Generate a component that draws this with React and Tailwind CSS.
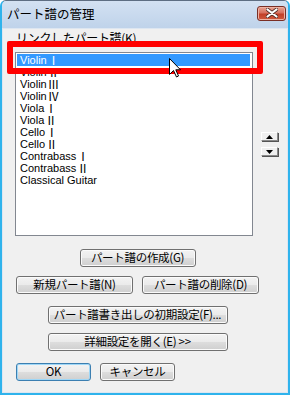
import React from 'react';

const PARTS = [
  ['Violin', 'Ⅰ'],
  ['Violin', 'Ⅱ'],
  ['Violin', 'Ⅲ'],
  ['Violin', 'Ⅳ'],
  ['Viola', 'Ⅰ'],
  ['Viola', 'Ⅱ'],
  ['Cello', 'Ⅰ'],
  ['Cello', 'Ⅱ'],
  ['Contrabass', 'Ⅰ'],
  ['Contrabass', 'Ⅱ'],
  ['Classical Guitar', ''],
];

function Btn({ children, className = '', primary = false }) {
  return (
    <button
      type="button"
      className={`flex h-[18px] items-center justify-center whitespace-nowrap rounded-[3px] border bg-[linear-gradient(#f3f3f3_0%,#ebebeb_48%,#dddddd_52%,#cfcfcf_100%)] text-[11.5px] leading-none tracking-[-0.3px] text-black ${
        primary
          ? 'border-[#3c7fb1] shadow-[inset_0_0_0_1px_#9fd7f7]'
          : 'border-[#707070] shadow-[inset_0_0_0_1px_#fbfbfb]'
      } ${className}`}
    >
      {children}
    </button>
  );
}

function ArrowBtn({ up }) {
  return (
    <button
      type="button"
      className="flex h-[9px] w-[17px] items-center justify-center border border-t-white border-l-white border-r-[#8a8a8a] border-b-[#8a8a8a] bg-[#f0f0f0] shadow-[1px_1px_0_#555]"
    >
      <svg width="7" height="4" viewBox="0 0 7 4">
        {up ? <path d="M3.5 0 7 4H0z" fill="#000" /> : <path d="M0 0h7L3.5 4z" fill="#000" />}
      </svg>
    </button>
  );
}

export default function App() {
  return (
    <div className="relative flex h-[395px] w-[290px] flex-col overflow-hidden rounded-t-[6px] border-2 border-t border-[#2fb3ec] border-t-[#5e6e82] bg-[#c5d7ed] font-['Noto_Sans_CJK_JP',sans-serif]">
      {/* title bar */}
      <div className="flex h-[27px] shrink-0 items-center justify-between bg-[linear-gradient(#d3e1f2,#bfd3ea)] pl-[5px] pr-[2px]">
        <span className="pb-[1px] text-[12.5px] leading-none text-black">パート譜の管理</span>
        <button
          type="button"
          className="mb-[3px] flex h-[15px] w-[29px] items-center justify-center rounded-[3px] border border-[#7a2f26] bg-[linear-gradient(#e8a493_0%,#d7705e_45%,#c23f27_55%,#cf5a3f_100%)] shadow-[inset_0_0_0_1px_#eeb2a3]"
        >
          <svg width="12" height="10" viewBox="0 0 12 10">
            <path d="M1.5 1.5 10.5 8.5M10.5 1.5 1.5 8.5" stroke="#4a2a25" strokeWidth="3.6" strokeLinecap="round" />
            <path d="M1.5 1.5 10.5 8.5M10.5 1.5 1.5 8.5" stroke="#fff" strokeWidth="2.2" strokeLinecap="round" />
          </svg>
        </button>
      </div>

      {/* client area */}
      <div className="flex flex-1 flex-col border border-[#dde6f1] bg-[#f0f0f0]">
        <div className="pl-[13px] pt-[3px] text-[12px] leading-[12px] tracking-[-0.3px] text-black">リンクしたパート譜(K)</div>

        <div className="mt-[8px] flex items-center">
          <div className="ml-[12px] h-[184px] w-[238px] border border-[#828790] bg-white p-px font-['Liberation_Sans',sans-serif] text-[11px]">
            {PARTS.map(([name, num], i) => (
              <div
                key={name + num}
                className={`mr-px flex h-[12px] items-center gap-[1px] pl-[3px] leading-[12px] ${i === 0 ? 'bg-[#3399ff] text-white' : 'text-black'}`}
              >
                <span>{name}</span>
                {num && <span className="font-['Noto_Sans_CJK_JP',sans-serif] text-[11.5px] leading-[12px]">{num}</span>}
              </div>
            ))}
          </div>
          <div className="ml-[8px] flex flex-col gap-[6px]">
            <ArrowBtn up />
            <ArrowBtn />
          </div>
        </div>

        <div className="ml-[13px] flex w-[243px] flex-col items-center">
          <Btn className="mt-[13px] w-[116px]">パート譜の作成(G)</Btn>
          <div className="mt-[9px] flex w-full gap-[9px]">
            <Btn className="w-[117px]">新規パート譜(N)</Btn>
            <Btn className="w-[117px]">パート譜の削除(D)</Btn>
          </div>
          <Btn className="mt-[12px] w-[180px]">パート譜書き出しの初期設定(F)...</Btn>
          <Btn className="mt-[9px] w-[180px]">詳細設定を開く(E) &gt;&gt;</Btn>
          <div className="mt-[12px] flex w-full gap-[9px]">
            <Btn primary className="w-[75px]">OK</Btn>
            <Btn className="w-[75px]">キャンセル</Btn>
          </div>
        </div>
      </div>

      {/* red annotation */}
      <div className="absolute left-[5px] top-[40px] h-[33px] w-[256px] rounded-[2px] border-[6px] border-[#ff0000]" />

      {/* mouse cursor */}
      <svg className="absolute left-[167px] top-[57px]" width="13" height="20" viewBox="0 0 13 20">
        <path d="M0.5 0.5V16.5L4.5 12.5L7.5 19L9.5 18L6.8 11.8H11.5Z" fill="#fff" stroke="#000" strokeWidth="1" strokeLinejoin="miter" />
      </svg>
    </div>
  );
}
